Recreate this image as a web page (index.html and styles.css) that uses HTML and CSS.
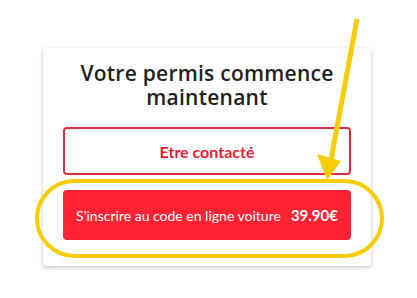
FILE: index.html
```html
<!DOCTYPE html>
<html lang="fr">
<head>
<meta charset="utf-8">
<link rel="stylesheet" href="styles.css">
</head>
<body>
<div class="page">
  <div class="card">
    <h2 class="title">Votre permis commence maintenant</h2>
    <a class="btn btn-outline">Etre contacté</a>
    <a class="btn btn-fill"><span class="label">S'inscrire au code en ligne voiture</span><span class="price">39.90€</span></a>
  </div>
  <svg class="annot" width="417" height="298" viewBox="0 0 417 298">
    <line x1="357" y1="19" x2="331" y2="160" stroke="#f7cc00" stroke-width="5" stroke-linecap="butt"/>
    <polygon points="317,154 341,161 327,180" fill="#f7cc00"/>
    <rect x="37" y="181" width="345" height="75" rx="37.5" ry="37.5" fill="none" stroke="#f7cc00" stroke-width="4"/>
  </svg>
</div>
</body>
</html>
```
FILE: styles.css
```css
html, body {
  margin: 0;
  padding: 0;
  background: #ffffff;
}
.page {
  position: relative;
  width: 417px;
  height: 298px;
  padding: 48px 0 0 43px;
  box-sizing: border-box;
}
.card {
  width: 328px;
  box-sizing: border-box;
  padding: 13px 20px 26px;
  background: #fff;
  border-radius: 4px;
  box-shadow: 0 2px 4px rgba(60, 80, 100, 0.28), 0 0 2px rgba(0, 0, 0, 0.08);
  display: flex;
  flex-direction: column;
}
.title {
  margin: 0 0 18px;
  font-family: "Open Sans", sans-serif;
  font-weight: 600;
  font-size: 21px;
  line-height: 24px;
  letter-spacing: 0.25px;
  color: #222;
  text-align: center;
}
.btn {
  display: flex;
  align-items: center;
  justify-content: center;
  box-sizing: border-box;
  border-radius: 4px;
  font-family: Lato, sans-serif;
}
.btn-outline {
  height: 48px;
  border: 2px solid #d6303e;
  color: #ec1c36;
  font-weight: 700;
  font-size: 16px;
}
.btn-fill {
  margin-top: 15px;
  height: 50px;
  background: #ff2233;
  color: #fff;
  gap: 10px;
}
.label {
  font-size: 14px;
  font-weight: 400;
}
.price {
  font-size: 15px;
  font-weight: 700;
}
.annot {
  position: absolute;
  left: 0;
  top: 0;
  pointer-events: none;
}
```
